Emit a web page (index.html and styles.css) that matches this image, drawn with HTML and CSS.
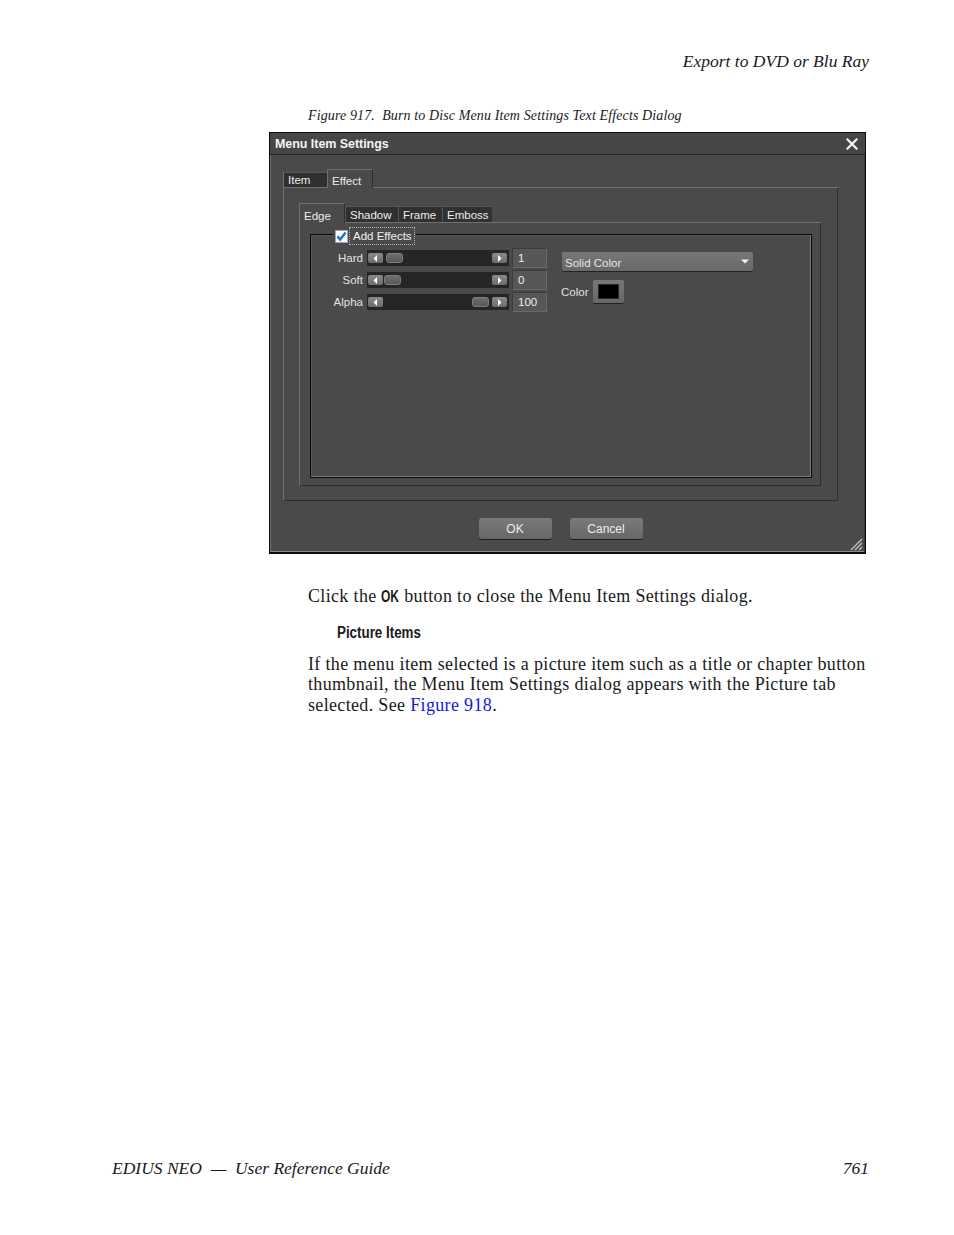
FILE: index.html
```html
<!DOCTYPE html>
<html>
<head>
<meta charset="utf-8">
<link rel="stylesheet" href="styles.css">
</head>
<body>
<div class="page">
  <div class="running-head">Export to DVD or Blu Ray</div>
  <div class="caption">Figure 917.&nbsp; Burn to Disc Menu Item Settings Text Effects Dialog</div>

  <div class="dialog">
    <div class="titlebar">
      <span class="title">Menu Item Settings</span>
      <svg class="close" width="12" height="12" viewBox="0 0 12 12"><path d="M1.5 1.5 L10.5 10.5 M10.5 1.5 L1.5 10.5" stroke="#f4f4f4" stroke-width="2.2" stroke-linecap="square"/></svg>
    </div>
    <div class="dlg-body">
      <div class="tabstrip outer">
        <div class="tab first w-item">Item</div>
        <div class="tab active w-effect">Effect</div>
        <div class="tab-fill"></div>
      </div>
      <div class="panel outer-panel">
        <div class="tabstrip inner">
          <div class="tab active first w-edge">Edge</div>
          <div class="tab w-shadow">Shadow</div>
          <div class="tab w-frame">Frame</div>
          <div class="tab w-emboss">Emboss</div>
          <div class="tab-fill"></div>
        </div>
        <div class="panel inner-panel">
          <div class="group">
            <div class="legend">
              <svg class="checkbox" width="13" height="13" viewBox="0 0 13 13"><rect x="0.5" y="0.5" width="12" height="12" fill="#ffffff" stroke="#9aa7b8"/><path d="M2.4 6.4 L5.2 9.6 L10.6 2.6" fill="none" stroke="#1f6fd6" stroke-width="2.4"/></svg>
              <span class="focus">Add Effects</span>
            </div>
            <div class="group-content">
              <div class="sliders">
                <div class="srow">
                  <span class="slabel">Hard</span>
                  <div class="track">
                    <span class="sbtn"><svg width="5" height="7" viewBox="0 0 5 7"><path d="M4 0 L0.5 3.5 L4 7Z" fill="#fff"/></svg></span>
                    <span class="thumb"></span>
                    <span class="spacer"></span>
                    <span class="sbtn"><svg width="5" height="7" viewBox="0 0 5 7"><path d="M1 0 L4.5 3.5 L1 7Z" fill="#fff"/></svg></span>
                  </div>
                  <span class="val">1</span>
                </div>
                <div class="srow">
                  <span class="slabel">Soft</span>
                  <div class="track">
                    <span class="sbtn"><svg width="5" height="7" viewBox="0 0 5 7"><path d="M4 0 L0.5 3.5 L4 7Z" fill="#fff"/></svg></span>
                    <span class="thumb thumb-soft"></span>
                    <span class="spacer"></span>
                    <span class="sbtn"><svg width="5" height="7" viewBox="0 0 5 7"><path d="M1 0 L4.5 3.5 L1 7Z" fill="#fff"/></svg></span>
                  </div>
                  <span class="val">0</span>
                </div>
                <div class="srow">
                  <span class="slabel">Alpha</span>
                  <div class="track">
                    <span class="sbtn"><svg width="5" height="7" viewBox="0 0 5 7"><path d="M4 0 L0.5 3.5 L4 7Z" fill="#fff"/></svg></span>
                    <span class="spacer"></span>
                    <span class="thumb thumb-end"></span>
                    <span class="sbtn"><svg width="5" height="7" viewBox="0 0 5 7"><path d="M1 0 L4.5 3.5 L1 7Z" fill="#fff"/></svg></span>
                  </div>
                  <span class="val">100</span>
                </div>
              </div>
              <div class="side">
                <div class="dropdown">
                  <span>Solid Color</span>
                  <svg width="8" height="5" viewBox="0 0 8 5"><path d="M0 0.5 H8 L4 4.5Z" fill="#f2f2f2"/></svg>
                </div>
                <div class="color-row">
                  <span class="clabel">Color</span>
                  <span class="swatch"><span class="swatch-inner"></span></span>
                </div>
              </div>
            </div>
          </div>
        </div>
      </div>
      <div class="buttons">
        <span class="btn">OK</span>
        <span class="btn">Cancel</span>
      </div>
    </div>
    <svg class="grip" width="14" height="14" viewBox="0 0 14 14"><path d="M13 2 L2 13 M13 6 L6 13 M13 10 L10 13" stroke="#c8c8c8" stroke-width="1.2"/></svg>
  </div>

  <p class="text first-p">Click the <b class="cmd">OK</b> button to close the Menu Item Settings dialog.</p>
  <h4 class="subhead">Picture Items</h4>
  <p class="text">If the menu item selected is a picture item such as a title or chapter button<br>thumbnail, the Menu Item Settings dialog appears with the Picture tab<br>selected. See <span class="link">Figure 918</span>.</p>

  <div class="footer">
    <span>EDIUS NEO &nbsp;—&nbsp; User Reference Guide</span>
    <span>761</span>
  </div>
</div>
</body>
</html>
```

FILE: styles.css
```css
html, body {
  margin: 0;
  padding: 0;
  background: #ffffff;
}

.page {
  width: 954px;
  height: 1235px;
  display: flex;
  flex-direction: column;
  box-sizing: border-box;
  font-family: "Liberation Serif", serif;
  color: #1a1a1a;
}

.running-head {
  margin-top: 51px;
  align-self: flex-end;
  margin-right: 85px;
  font-style: italic;
  font-size: 17.5px;
  line-height: 20px;
}

.caption {
  margin: 37px 0 0 308px;
  font-style: italic;
  font-size: 14px;
  letter-spacing: 0.12px;
  line-height: 16px;
  white-space: pre;
}

/* ---------- dialog ---------- */
.dialog {
  position: relative;
  margin: 8px 0 0 269px;
  width: 597px;
  height: 422px;
  box-sizing: border-box;
  border: 1px solid #0b0b0b;
  border-bottom-width: 2px;
  background: #4a4a4a;
  box-shadow: inset 1px 0 #707070, inset -1px 0 #3a3a3a, inset 0 -1px #8a8a8a;
  font-family: "Liberation Sans", sans-serif;
  font-size: 11.5px;
  color: #e6e6e6;
}

.titlebar {
  height: 21px;
  border-bottom: 1px solid #262626;
  background: #464646;
  display: flex;
  align-items: center;
  justify-content: space-between;
  padding: 0 7px 0 5px;
}

.title {
  font-weight: bold;
  font-size: 12.5px;
  color: #f4f4f4;
  letter-spacing: -0.05px;
}

.close { display: block; }

.dlg-body {
  padding: 14px 27px 12px 13px;
  display: flex;
  flex-direction: column;
}

.tabstrip {
  display: flex;
  align-items: flex-end;
  height: 19px;
}

.tabstrip.inner { height: 20px; }

.tab {
  box-sizing: border-box;
  height: 16px;
  padding: 0 0 0 4px;
  background: #303030;
  border-top: 1px solid #565656;
  border-left: 1px solid #565656;
  border-bottom: 1px solid #707070;
  display: flex;
  align-items: center;
  color: #ececec;
  white-space: nowrap;
}

.tabstrip.inner .tab { height: 17px; padding-top: 1px; }

.tab.first { border-left-color: #707070; }

.tab.active {
  height: 19px;
  background: #4a4a4a;
  border-top: 1px solid #707070;
  border-left: 1px solid #707070;
  border-right: 1px solid #2e2e2e;
  border-bottom: none;
  padding-top: 3px;
}

.tabstrip.inner .tab.active { height: 20px; padding-top: 5px; }

.w-item { width: 44px; }
.w-effect { width: 46px; }
.w-edge { width: 46px; }
.w-shadow { width: 53px; }
.w-frame { width: 44px; }
.w-emboss { width: 50px; }

.tab-fill {
  flex: 1;
  border-bottom: 1px solid #707070;
}

.panel {
  box-sizing: border-box;
  border-left: 1px solid #707070;
  border-right: 1px solid #2f2f2f;
  border-bottom: 1px solid #2f2f2f;
  display: flex;
  flex-direction: column;
}

.outer-panel {
  height: 313px;
  padding: 15px 16px 14px 15px;
}

.inner-panel {
  flex: 1;
  padding: 11px 8px 7px 10px;
}

.group {
  flex: 1;
  border: 1px solid #080808;
  box-shadow: inset -1px -1px #7a7a7a, inset 1px 1px #585858;
}

.legend {
  display: flex;
  align-items: center;
  width: fit-content;
  height: 18px;
  margin: -8px 0 0 22px;
  padding: 0 1px;
  background: #4a4a4a;
}

.checkbox {
  display: block;
  margin: 0 1px 0 1px;
}

.focus {
  height: 16px;
  line-height: 16px;
  padding: 0 2px 0 3px;
  border: 1px dotted #b4b4b4;
  color: #f0f0f0;
}

.group-content {
  display: flex;
  margin: 3px 0 0 18px;
}

.sliders {
  display: flex;
  flex-direction: column;
  gap: 2px;
}

.srow {
  display: flex;
  align-items: center;
  height: 20px;
}

.slabel {
  width: 34px;
  text-align: right;
  color: #e2e2e2;
}

.track {
  margin-left: 4px;
  width: 142px;
  height: 16px;
  box-sizing: border-box;
  background: #262626;
  display: flex;
  align-items: center;
  padding: 0 2px 0 1px;
  gap: 3px;
}

.sbtn {
  width: 15px;
  height: 10px;
  border-radius: 2px;
  background: linear-gradient(#8a8a8a, #6c6c6c);
  display: flex;
  align-items: center;
  justify-content: center;
}

.sbtn svg { display: block; }

.thumb {
  width: 17px;
  height: 10px;
  box-sizing: border-box;
  border-radius: 3px;
  background: linear-gradient(#6e6e6e, #585858);
  border: 1px solid #7e7e7e;
}

.thumb-soft { margin-left: -2px; }

.spacer { flex: 1; }

.val {
  margin-left: 3px;
  width: 35px;
  height: 20px;
  box-sizing: border-box;
  background: #575757;
  border: 1px solid #6a6a6a;
  border-top-color: #3c3c3c;
  border-left-color: #3c3c3c;
  padding-left: 5px;
  line-height: 18px;
  color: #ececec;
}

.side {
  margin-left: 14px;
  display: flex;
  flex-direction: column;
}

.dropdown {
  margin: 4px 0 0 1px;
  width: 191px;
  height: 19px;
  box-sizing: border-box;
  border-radius: 2px;
  background: linear-gradient(#777777, #686868);
  box-shadow: 0 1px 0 #222222;
  display: flex;
  align-items: center;
  justify-content: space-between;
  padding: 0 4px 0 3px;
  color: #e6e6e6;
}

.dropdown span { padding-top: 2px; }

.color-row {
  margin-top: 9px;
  display: flex;
  align-items: center;
  gap: 5px;
}

.clabel { color: #e2e2e2; }

.swatch {
  width: 31px;
  height: 23px;
  box-sizing: border-box;
  border-radius: 2px;
  background: linear-gradient(#777777, #666666);
  box-shadow: 0 1px 0 #222222;
  display: flex;
  align-items: center;
  justify-content: center;
}

.swatch-inner {
  width: 21px;
  height: 15px;
  background: #000;
  border: 1px solid #2a2a2a;
  box-sizing: border-box;
}

.buttons {
  margin-top: 17px;
  display: flex;
  justify-content: center;
  gap: 18px;
}

.btn {
  width: 73px;
  height: 21px;
  box-sizing: border-box;
  border-radius: 3px;
  background: linear-gradient(#7a7a7a, #676767);
  box-shadow: 0 1px 0 #1e1e1e;
  display: flex;
  align-items: center;
  justify-content: center;
  color: #ececec;
  font-size: 12px;
}

.grip {
  position: absolute;
  right: 2px;
  bottom: 1px;
}

/* ---------- body text ---------- */
.text {
  margin: 0 0 0 308px;
  font-size: 18px;
  letter-spacing: 0.34px;
  line-height: 20.5px;
  white-space: nowrap;
}

.first-p { margin-top: 32px; }

.cmd {
  display: inline-block;
  font-family: "Liberation Sans", sans-serif;
  font-weight: bold;
  font-size: 16px;
  letter-spacing: 0;
  transform: scaleX(0.75);
  transform-origin: left center;
  margin-right: -6px;
}

.subhead {
  width: fit-content;
  margin: 16px 0 13px 337px;
  font-family: "Liberation Sans", sans-serif;
  font-weight: bold;
  font-size: 16px;
  line-height: 17px;
  transform: scaleX(0.835);
  transform-origin: left center;
}

.link { color: #1515e6; }

.footer {
  margin-top: auto;
  margin-bottom: 57px;
  padding: 0 85px 0 112px;
  display: flex;
  justify-content: space-between;
  font-style: italic;
  font-size: 17.5px;
  line-height: 20px;
}
```
